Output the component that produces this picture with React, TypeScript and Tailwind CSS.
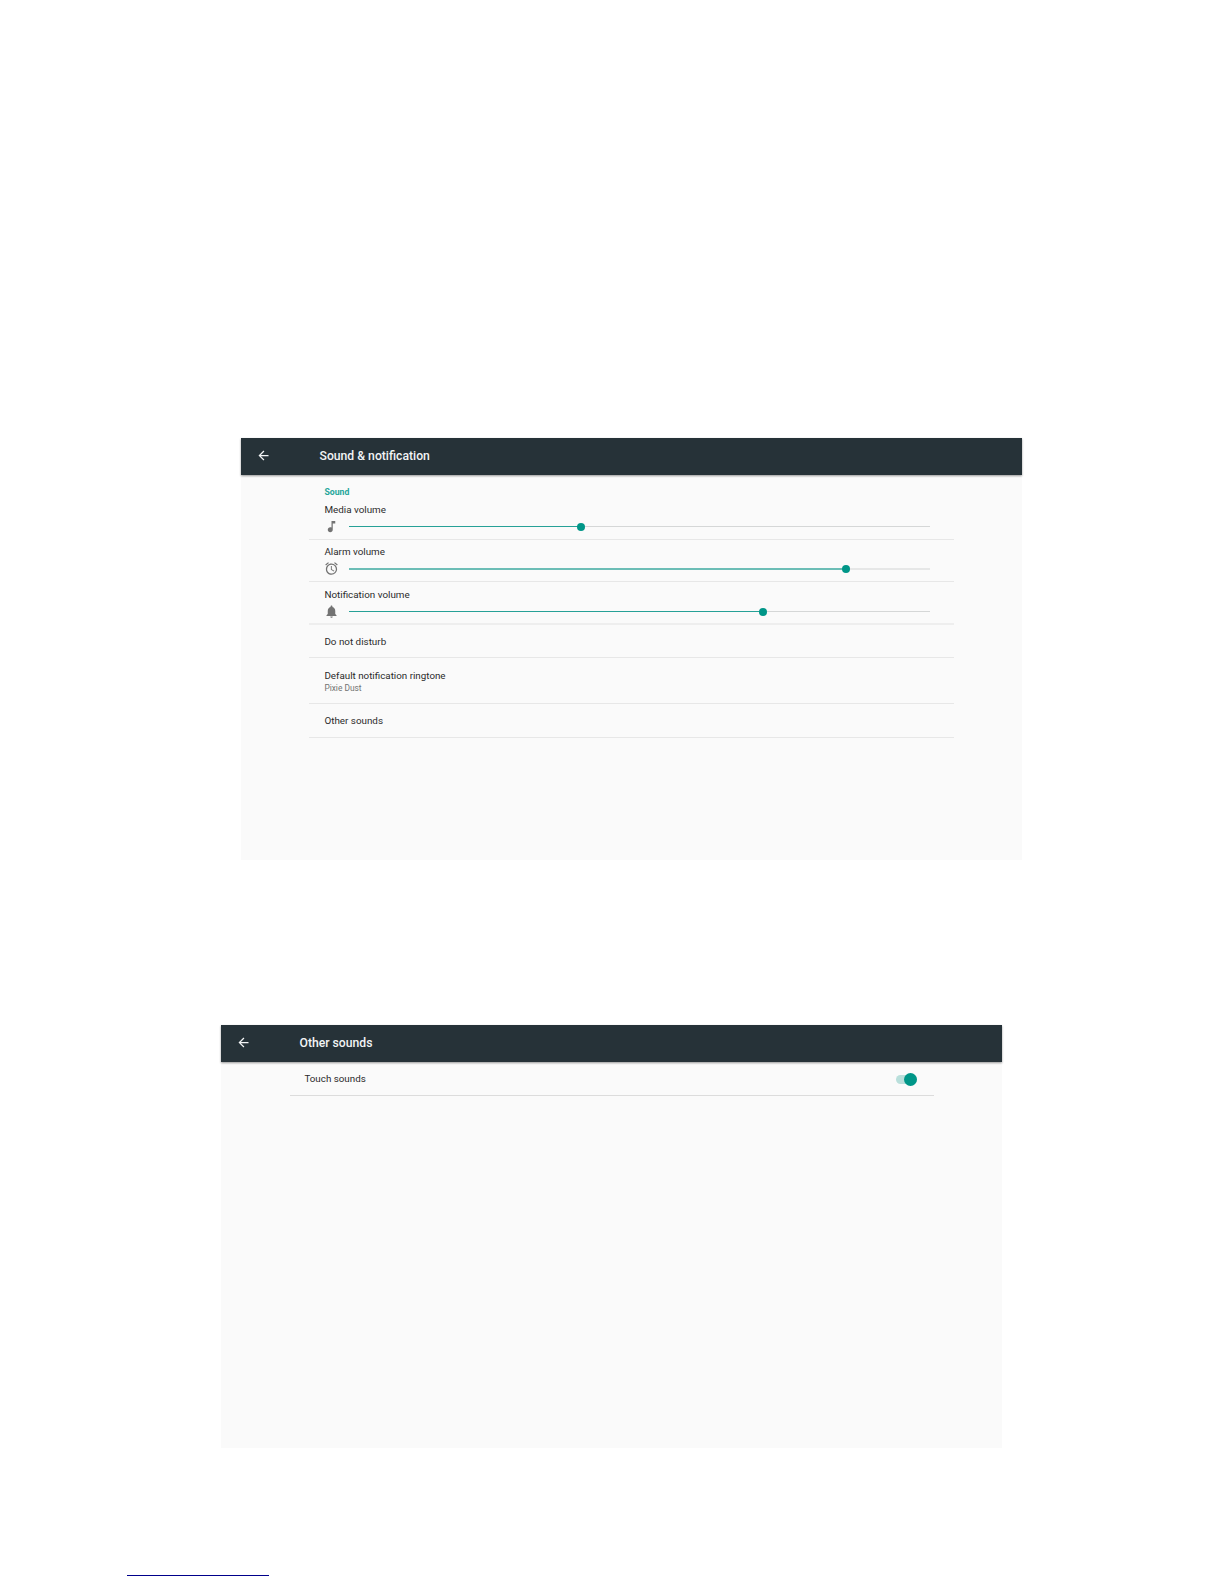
import React from "react";
import { MdAlarm, MdArrowBack, MdMusicNote, MdNotifications } from "react-icons/md";

function Header({ title }: { title: string }): React.ReactNode {
  return (
    <header className="flex h-[37px] items-center bg-[#263238] pb-[2px] pl-[15px] text-[#f2f4f5] shadow-[0_1px_2px_rgba(0,0,0,0.4)]">
      <button type="button" aria-label="Back">
        <MdArrowBack className="size-[15px]" />
      </button>
      <h1 className="ml-[48.5px] text-[12.2px] leading-4 font-medium whitespace-nowrap">{title}</h1>
    </header>
  );
}

function VolumeRow({
  label,
  value,
  icon,
  lineClass = "h-px bg-[#26a197]",
  trackClass = "h-px bg-[#d5d7d7]",
  rowClass = "h-[42px] border-b border-[#e7e7e7] pt-[5px]",
}: {
  label: string;
  value: number;
  icon: React.ReactNode;
  lineClass?: string;
  trackClass?: string;
  rowClass?: string;
}): React.ReactNode {
  return (
    <div className={`${rowClass} pl-[15px] pr-[24px]`}>
      <div className="h-[14px] pl-[0.4px] text-[9.85px] leading-[14px]">{label}</div>
      <div className="flex h-[19px] items-center">
        <div className="w-[25px] shrink-0 text-[#737373]">{icon}</div>
        <div className="relative flex flex-1 items-center">
          <div className={lineClass} style={{ width: `${value}%` }} />
          <div className={`flex-1 ${trackClass}`} />
          <span
            className="absolute size-2 -translate-x-1/2 rounded-full bg-[#009688]"
            style={{ left: `${value}%` }}
          />
        </div>
      </div>
    </div>
  );
}

export default function App(): React.ReactNode {
  return (
    <div className="flex h-[1584px] w-[1224px] flex-col bg-white pt-[438px] font-['Roboto',sans-serif] text-[#2b2b2b]">
      <section className="ml-[241px] h-[422px] w-[781px] bg-[#fafafa]">
        <Header title="Sound & notification" />
        <div className="ml-[68px] w-[645px]">
          <div className="h-[23px] pt-[10px] pl-[15.4px] text-[8.7px] leading-[14px] font-bold text-[#26a69a]">
            Sound
          </div>
          <VolumeRow label="Media volume" value={40} icon={<MdMusicNote className="size-[15px]" />} />
          <VolumeRow
            label="Alarm volume"
            value={85.6}
            icon={<MdAlarm className="size-[15px]" />}
            lineClass="h-0.5 bg-[#6cbdb6]"
            trackClass="h-0.5 bg-[#e6e7e7]"
          />
          <VolumeRow
            label="Notification volume"
            value={71.3}
            icon={<MdNotifications className="size-[15px]" />}
            rowClass="h-[43px] border-b-2 border-[#eeeeee] pt-[6px]"
          />
          <div className="flex h-[33px] items-center border-b border-[#e7e7e7] pt-[2px] pl-[15.4px] text-[9.85px]">
            Do not disturb
          </div>
          <div className="h-[46px] border-b border-[#e7e7e7] pt-[11px] pl-[15.4px]">
            <div className="text-[9.8px] leading-[13px]">Default notification ringtone</div>
            <div className="text-[8.4px] leading-[12px] text-[#737373]">Pixie Dust</div>
          </div>
          <div className="flex h-[34px] items-center border-b border-[#e7e7e7] pt-[2px] pl-[15.4px] text-[9.85px]">
            Other sounds
          </div>
        </div>
      </section>

      <section className="mt-[165px] ml-[221px] h-[423px] w-[781px] bg-[#fafafa]">
        <Header title="Other sounds" />
        <div className="ml-[69px] flex h-[34px] w-[644px] items-center justify-between border-b border-[#dcdcdc] pt-px pr-[17px] pl-[14.4px] text-[9.8px]">
          <span className="pt-px">Touch sounds</span>
          <span className="relative flex h-[9px] w-[21px] items-center rounded-full bg-[#b9dfdb]">
            <span className="absolute right-0 size-[13px] rounded-full bg-[#009688]" />
          </span>
        </div>
      </section>

      <div className="mt-[127px] ml-[127px] h-px w-[142px] bg-[#00008b]" />
    </div>
  );
}
